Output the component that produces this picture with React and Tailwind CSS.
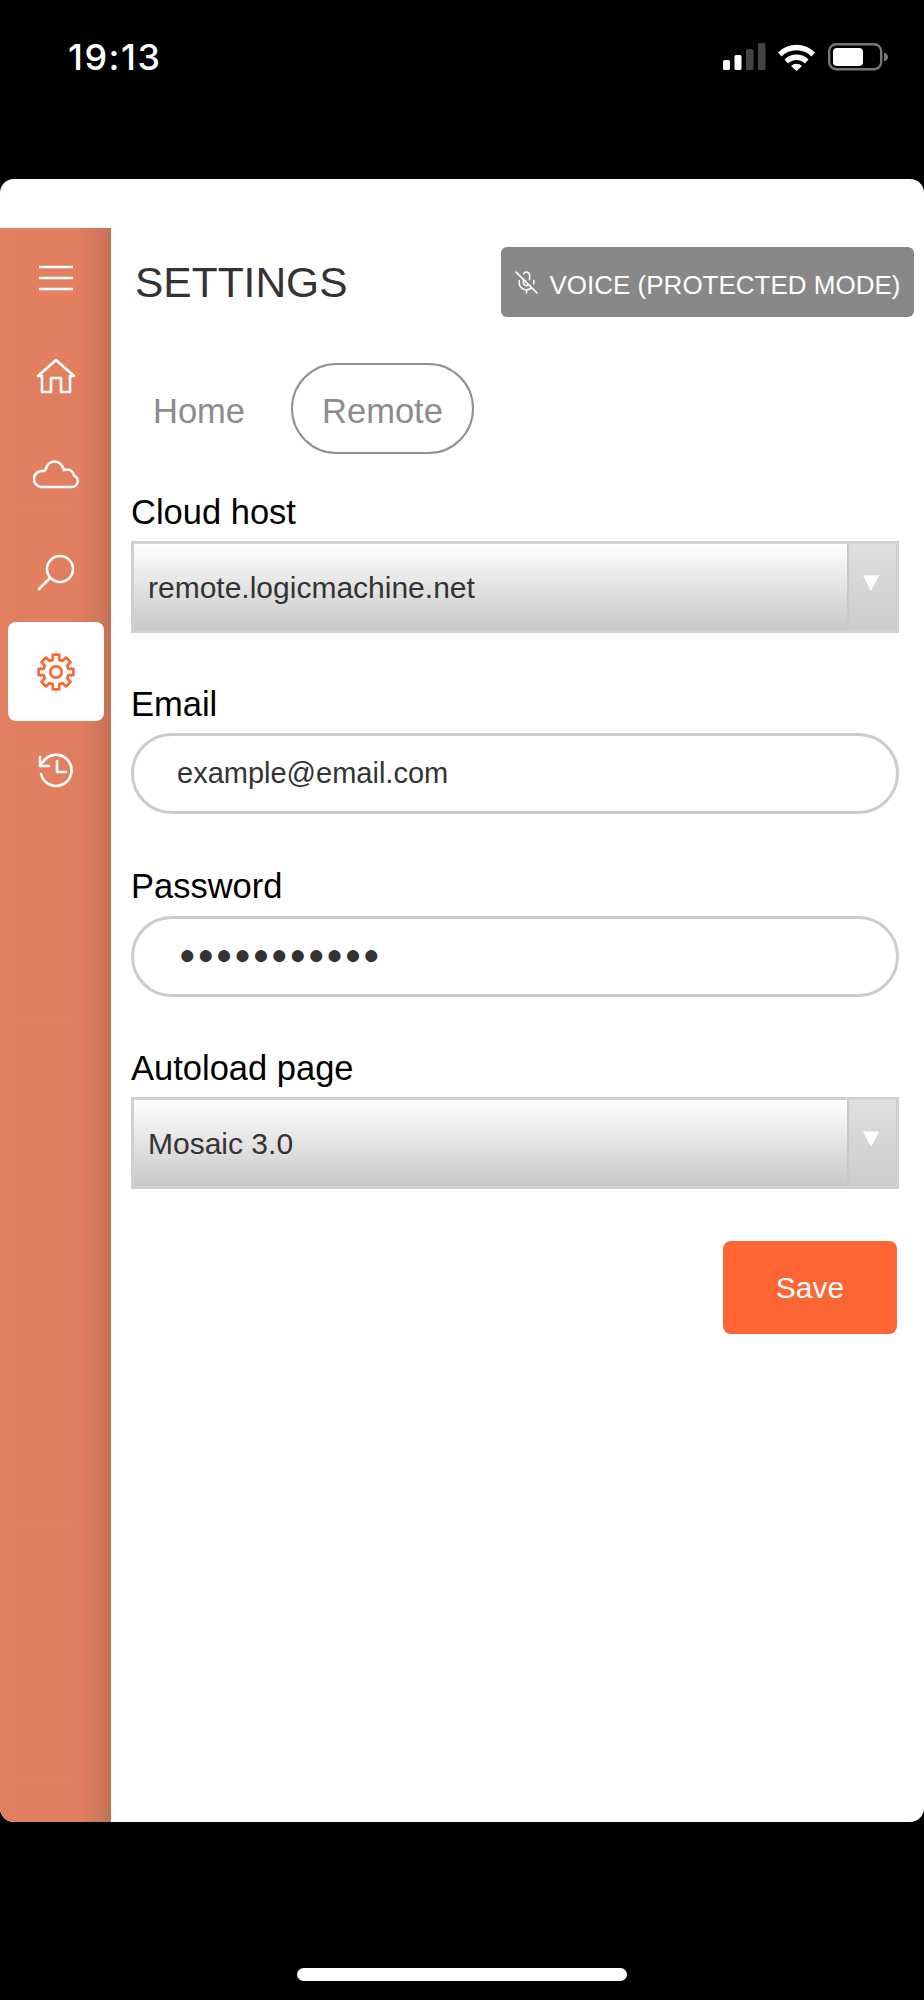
import React from 'react';
import { MicOff } from 'lucide-react';

const font = { fontFamily: '"Liberation Sans", Arial, sans-serif' };

const MenuIcon = () => (
  <svg width="36" height="26" viewBox="0 0 36 26" fill="none" stroke="white" strokeWidth="2.6" className="mt-[2px]">
    <path d="M1 2h34M1 13h34M1 24h34" />
  </svg>
);

const HomeIcon = () => (
  <svg width="40" height="36" viewBox="0 0 40 36" fill="none" stroke="white" strokeWidth="2.6" strokeLinejoin="round" strokeLinecap="round">
    <path d="M2 18 20 2l18 16h-4v16H25V20H15v14H6V18z" />
  </svg>
);

const CloudIcon = () => (
  <svg width="46" height="30" viewBox="0 0 46 30" fill="none" stroke="white" strokeWidth="2.6" strokeLinejoin="round">
    <path d="M8 28H38a6 6 0 0 0 3-11.5c-.5-3-3-6-7-6-1.5 0-2.5.3-3 .7-1.500-5-5-8.700-9-8.700-4.500 0-8 3-9 7-.5 1.500-1.500 2.500-3 2.500a8 8 0 0 0-2 16z" />
  </svg>
);

const SearchIcon = () => (
  <svg width="38" height="38" viewBox="0 0 38 38" fill="none" stroke="white" strokeWidth="2.6" strokeLinecap="round">
    <circle cx="23" cy="15" r="13" />
    <path d="M13 24 2 35" />
  </svg>
);

const GearIcon = () => (
  <svg width="38" height="38" viewBox="0 0 24 24" fill="none" stroke="#fd6535" strokeWidth="1.7" strokeLinejoin="round">
    <path d="M10 1h4v3.200l2 .8 2.300-2.200 2.900 2.900L19 8l.8 2H23v4h-3.200l-.8 2 2.200 2.300-2.900 2.900L16 19l-2 .8V23h-4v-3.200L8 19l-2.300 2.200-2.900-2.900L5 16l-.8-2H1v-4h3.200L5 8 2.800 5.700l2.900-2.900L8 5l2-.8V1z" />
    <circle cx="12" cy="12" r="3.6" />
  </svg>
);

const HistoryIcon = () => (
  <svg width="36" height="36" viewBox="0 0 36 36" fill="none" stroke="white" strokeWidth="2.6" strokeLinecap="round" strokeLinejoin="round">
    <path d="M3 22a15.500 15.500 0 1 0 2-12L2 13" />
    <path d="M2 5v9h9" />
    <path d="M19 9v11h9" />
  </svg>
);

const StatusIcons = () => (
  <svg width="166" height="28" viewBox="0 0 166 28" fill="none">
    <rect x="0" y="17" width="7" height="10" rx="1.5" fill="white" />
    <rect x="11.5" y="12" width="7" height="15" rx="1.5" fill="white" />
    <rect x="23" y="6" width="7.5" height="21" rx="1.5" fill="#444" />
    <rect x="35" y="0" width="7.5" height="27" rx="1.5" fill="#444" />
    <path d="M55 9.500a26 26 0 0 1 37 0l-3.500 4a21 21 0 0 0-30 0z" fill="white" />
    <path d="M61.500 16.500a17 17 0 0 1 24 0l-3.500 4a12 12 0 0 0-17 0z" fill="white" />
    <path d="M68 23a8 8 0 0 1 11 0l-5.500 5z" fill="white" />
    <rect x="106.2" y="1.2" width="52" height="25" rx="7" stroke="#777" strokeWidth="2.4" />
    <rect x="110" y="5" width="30" height="18" rx="4" fill="white" />
    <path d="M161 9.500c2.500 1 4 2.500 4 4.500s-1.500 3.500-4 4.500z" fill="#777" />
  </svg>
);

const navItems = [
  { id: 'menu', icon: <MenuIcon /> },
  { id: 'home', icon: <HomeIcon /> },
  { id: 'cloud', icon: <CloudIcon /> },
  { id: 'search', icon: <SearchIcon /> },
  { id: 'settings', icon: <GearIcon />, active: true },
  { id: 'history', icon: <HistoryIcon /> },
];

const Field = ({ label, className, children }) => (
  <div className={className}>
    <label className="block h-[40px] leading-[40px] text-[34.5px] text-black">{label}</label>
    <div className="mt-[9px]">{children}</div>
  </div>
);

const Select = ({ value }) => (
  <div className="flex h-[92px] w-[768px] border-[3px] border-[#d0d0d0] bg-gradient-to-b from-white to-[#c8c8c8]">
    <div className="flex-1 flex items-center pl-[14px] text-[30px] text-[#333333]">{value}</div>
    <div className="w-[49px] flex justify-center pt-[31px] pr-[3px] border-l-2 border-[#c8c8c8] bg-gradient-to-b from-[#dfdfdf] to-[#cccccc]">
      <svg width="18" height="17" viewBox="0 0 18 17">
        <path d="M0 0h18L9 17z" fill="white" stroke="#bbbbbb" strokeWidth="0.5" />
      </svg>
    </div>
  </div>
);

const Input = ({ children, className }) => (
  <div className={`flex items-center h-[81px] w-[768px] rounded-[41px] border-[3px] border-[#cccccc] bg-white text-[#333333] ${className}`}>
    {children}
  </div>
);

export default function App() {
  return (
    <div className="w-[924px] h-[2000px] bg-black flex flex-col" style={font}>
      {/* Status bar */}
      <div className="h-[179px] flex justify-between items-start pl-[68px] pr-[35px] pt-[43px]">
        <span className="text-[36px] leading-[28px] tracking-[1.5px] font-medium text-white" style={{ fontFamily: 'Inter, sans-serif' }}>19:13</span>
        <StatusIcons />
      </div>

      {/* Card */}
      <div className="h-[1643px] bg-white rounded-[14px] overflow-hidden flex flex-col">
        <div className="h-[49px] shrink-0"></div>
        <div className="flex flex-1">
          <aside className="w-[111px] shrink-0 bg-gradient-to-r from-[#e27f60] from-70% to-[#c47257]">
            {navItems.map((item) => (
              <div
                key={item.id}
                className={`h-[98.6px] ml-[8px] w-[96px] flex items-center justify-center rounded-[8px] ${item.active ? 'bg-white' : ''}`}
              >
                {item.icon}
              </div>
            ))}
          </aside>

          <main className="flex-1 pt-[19px]">
            <div className="flex justify-between items-center pl-[24px] pr-[10px]">
              <h1 className="text-[42.5px] leading-none pt-[2px] text-[#333333]">SETTINGS</h1>
              <button className="h-[70px] w-[413px] flex items-center justify-center gap-[10px] rounded-[6px] bg-[#888888] text-white text-[26px]">
                <MicOff size={25} strokeWidth={1.5} />
                <span className="pt-[7px]">VOICE (PROTECTED MODE)</span>
              </button>
            </div>

            <div className="flex items-center mt-[46px] ml-[42px] text-[34.5px] text-[#8c8c8c]">
              <span className="w-[138px] pt-[6px]">Home</span>
              <span className="h-[91px] w-[183px] pt-[6px] flex items-center justify-center rounded-[46px] border-[2.5px] border-[#909090]">Remote</span>
            </div>

            <div className="pl-[20px]">
              <Field label="Cloud host" className="mt-[38px]">
                <Select value="remote.logicmachine.net" />
              </Field>
              <Field label="Email" className="mt-[51px]">
                <Input className="pl-[43px] text-[29px]">example@email.com</Input>
              </Field>
              <Field label="Password" className="mt-[52px]">
                <Input className="mt-[10px] pl-[45px] pb-[3px] text-[28px] tracking-[1.5px]">●●●●●●●●●●●</Input>
              </Field>
              <Field label="Autoload page" className="mt-[51px]">
                <Select value="Mosaic 3.0" />
              </Field>
            </div>

            <div className="flex justify-end pr-[27px] mt-[52px]">
              <button className="h-[93px] w-[174px] rounded-[8px] bg-[#fd6535] text-white text-[30px]">Save</button>
            </div>
          </main>
        </div>
      </div>

      {/* Home indicator */}
      <div className="flex-1 flex justify-center pt-[146px]">
        <div className="h-[13px] w-[330px] rounded-full bg-white"></div>
      </div>
    </div>
  );
}
